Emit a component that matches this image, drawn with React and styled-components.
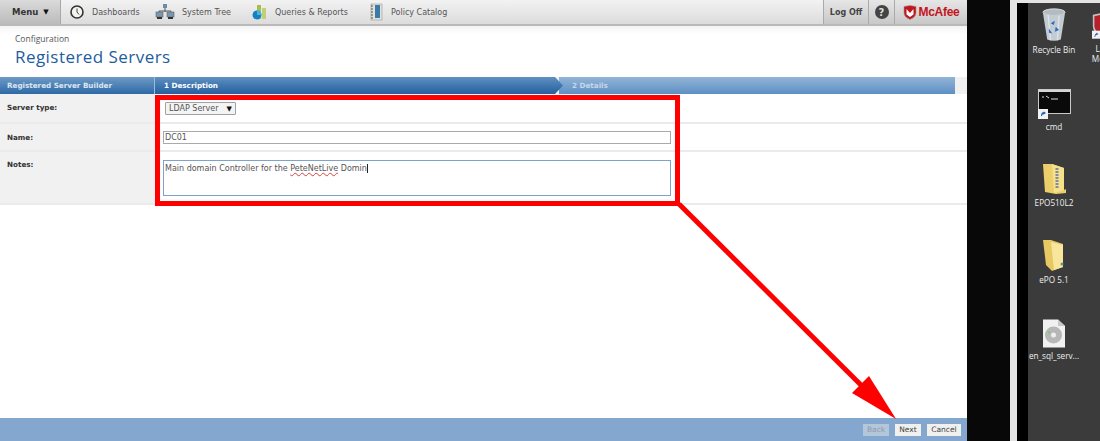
import React from "react";
import styled, { createGlobalStyle } from "styled-components";

const GlobalStyle = createGlobalStyle`
  html, body {
    margin: 0;
    padding: 0;
    background: #000;
  }
  * {
    box-sizing: border-box;
  }
`;

const navItems = [
  { label: "Dashboards", icon: <ClockIcon />, width: 86 },
  { label: "System Tree", icon: <TreeIcon />, width: 97 },
  { label: "Queries & Reports", icon: <ChartIcon />, width: 116 },
  { label: "Policy Catalog", icon: <BookIcon />, width: 95 },
];

const desktopItems = [
  { label: "Recycle Bin", x: 1024, y: 8, icon: <BinIcon /> },
  { label: "cmd", x: 1024, y: 85, icon: <CmdIcon /> },
  { label: "EPO510L2", x: 1024, y: 161, icon: <ZipFolderIcon /> },
  { label: "ePO 5.1", x: 1024, y: 238, icon: <FolderIcon /> },
  { label: "en_sql_serv...", x: 1024, y: 314, icon: <DiscIcon /> },
];

function ClockIcon() {
  return (
    <svg width="16" height="16" viewBox="0 0 16 16">
      <circle cx="8" cy="8" r="6" fill="#f4f4f0" stroke="#333" strokeWidth="1.6" />
      <path d="M8 4.5 V8 L10 10.5" fill="none" stroke="#444" strokeWidth="1" />
    </svg>
  );
}

function TreeIcon() {
  return (
    <svg width="20" height="18" viewBox="0 0 20 18">
      <rect x="8" y="1" width="4" height="4" fill="#6b8ba8" />
      <path d="M10 5 V9 M4 10 V8 H16 V10" fill="none" stroke="#555" strokeWidth="1" />
      <rect x="1" y="9" width="7" height="5" fill="#7d98ae" stroke="#56636e" strokeWidth=".6" />
      <rect x="12" y="9" width="7" height="5" fill="#7d98ae" stroke="#56636e" strokeWidth=".6" />
      <rect x="2" y="14" width="5" height="2" fill="#333" />
      <rect x="13" y="14" width="5" height="2" fill="#333" />
    </svg>
  );
}

function ChartIcon() {
  return (
    <svg width="16" height="18" viewBox="0 0 16 18">
      <rect x="5" y="2" width="4" height="14" fill="#a5c04a" />
      <rect x="10" y="5" width="4" height="11" fill="#c2cf76" />
      <circle cx="5" cy="12" r="4.5" fill="#1680c4" />
      <path d="M5 12 V7.5 A4.5 4.5 0 0 1 9.5 12 Z" fill="#43b6d6" />
    </svg>
  );
}

function BookIcon() {
  return (
    <svg width="13" height="18" viewBox="0 0 13 18">
      <rect x="1" y="1" width="11" height="16" fill="#e2e2dc" stroke="#9a9a94" strokeWidth=".6" />
      <rect x="5" y="2" width="5" height="13" fill="#3a7aa8" />
      <path d="M1 3 H3 M1 6 H3 M1 9 H3 M1 12 H3 M1 15 H3" stroke="#555" strokeWidth="1" />
    </svg>
  );
}

function ShieldIcon() {
  return (
    <svg width="14" height="15" viewBox="0 0 14 15">
      <path d="M1 1.5 L7 .5 L13 1.5 V8 Q13 12 7 14.5 Q1 12 1 8 Z" fill="#c4141c" stroke="#999" strokeWidth=".6" />
      <path d="M3.5 4 L7 8 L10.5 4 V9.5 L7 12 L3.5 9.5 Z" fill="#fff" />
    </svg>
  );
}

function BinIcon() {
  return (
    <svg width="26" height="34" viewBox="0 0 30 40">
      <ellipse cx="15" cy="5" rx="13" ry="4" fill="#b4bcc2" stroke="#dfe4e6" />
      <path d="M2 6 L7 37 Q15 40 23 37 L28 6 Q15 11 2 6 Z" fill="#c3ccd2" />
      <path d="M8 8 L11 38 M21 9 L19 38" stroke="#eef1f2" strokeWidth="1.5" opacity=".7" />
      <path d="M11 18 L16 15 L15 20 Z M17 22 L21 26 L16 28 Z M9 24 L13 30 L9 29 Z" fill="#2e6fc4" />
    </svg>
  );
}

function CmdIcon() {
  return (
    <svg width="33" height="30" viewBox="0 0 33 30">
      <rect x=".5" y=".5" width="32" height="24" fill="#0a0a0a" stroke="#c9c9c9" />
      <rect x="1" y="1" width="31" height="2" fill="#d5d5d5" />
      <path d="M4 8 H6 M8 7 L11 9 M13 10 H20" stroke="#ddd" strokeWidth="1" />
      <rect x="0" y="20" width="10" height="10" fill="#f2f2f2" />
      <path d="M3 27 Q3 23 6 23 L5 22 L8 24 L5 26 L6 25 Q4 25 4 27 Z" fill="#1c5fb4" />
    </svg>
  );
}

function ZipFolderIcon() {
  return (
    <svg width="25" height="32" viewBox="0 0 25 32">
      <path d="M1 1 H10 L22 5 V27 L24 26 V30 L14 31 L3 29 Z" fill="#eccf6a" />
      <path d="M10 1 L22 5 V27 L12 30 Z" fill="#f6e08c" />
      <path d="M15 5 V26" stroke="#7d8d9c" strokeWidth="3" strokeDasharray="2 1" />
    </svg>
  );
}

function FolderIcon() {
  return (
    <svg width="25" height="33" viewBox="0 0 25 33">
      <path d="M1 1 H9 L21 5 V28 L10 32 L4 26 Z" fill="#e7c862" />
      <path d="M9 3 L21 6 V28 L12 31 Z" fill="#f7e69c" />
      <circle cx="20" cy="25" r="1.5" fill="#6c8aa0" />
    </svg>
  );
}

function DiscIcon() {
  return (
    <svg width="24" height="29" viewBox="0 0 24 29">
      <path d="M1 .5 H16 L23 7 V28.5 H1 Z" fill="#f1f1f1" />
      <path d="M16 .5 V7 H23 Z" fill="#c8c8c8" />
      <circle cx="11.5" cy="16" r="8.5" fill="#b7b7b7" />
      <circle cx="11.5" cy="16" r="2.5" fill="#eee" />
      <circle cx="7" cy="13.5" r="1" fill="#66cc66" />
    </svg>
  );
}

function ShortcutShieldIcon() {
  return (
    <svg width="30" height="33" viewBox="0 0 30 33">
      <path d="M1 3 L15 0 L29 3 V17 Q29 26 15 33 Q1 26 1 17 Z" fill="#c0c0c0" />
      <path d="M3 5 L15 2 L27 5 V17 Q27 24 15 30 Q3 24 3 17 Z" fill="#b5202a" />
      <rect x="0" y="23" width="10" height="10" fill="#f2f2f2" />
      <path d="M3 31 Q3 27 6 26 L5 25 L8 27 L5 29 L6 28 Q4 28 4 31 Z" fill="#1c5fb4" />
    </svg>
  );
}

const Screen = styled.div`
  display: flex;
  position: relative;
  width: 1100px;
  height: 441px;
  overflow: hidden;
  background: #080808;
`;

const Console = styled.div`
  display: flex;
  flex-direction: column;
  width: 967px;
  height: 441px;
  background: #fff;
  font-family: "DejaVu Sans", sans-serif;
  font-size: 8px;
  color: #444;
`;

const TopBar = styled.header`
  display: flex;
  align-items: stretch;
  height: 26px;
  background: linear-gradient(#f2f2f2, #dcdcdc);
  border-bottom: 2px solid #b9b9b9;
`;

const MenuButton = styled.div`
  display: flex;
  align-items: center;
  gap: 5px;
  width: 61px;
  padding-left: 12px;
  background: linear-gradient(#dadada, #bbb);
  border-right: 1px solid #a8a8a8;
  font-size: 8.5px;
  font-weight: bold;
  color: #333;
`;

const NavList = styled.nav`
  display: flex;
  align-items: center;
  flex: 1;
  padding-left: 8px;
`;

const NavItem = styled.div`
  display: flex;
  align-items: center;
  gap: 7px;
  width: ${(p) => p.$width}px;
  white-space: nowrap;
  color: #555;
`;

const NavIcon = styled.span`
  display: flex;
  justify-content: center;
  flex: 0 0 ${(p) => p.$size || 16}px;
`;

const BarCell = styled.div`
  display: flex;
  align-items: center;
  justify-content: center;
  gap: 2px;
  width: ${(p) => p.$width}px;
  background: linear-gradient(#e6e6e6, #c8c8c8);
  border-left: 1px solid #aaa;
  font-weight: bold;
  color: #444;
`;

const HelpDot = styled.span`
  display: flex;
  align-items: center;
  justify-content: center;
  width: 14px;
  height: 14px;
  border-radius: 50%;
  background: #444;
  color: #ddd;
  font-size: 10px;
  font-weight: bold;
`;

const Brand = styled.span`
  font-family: "Liberation Sans", sans-serif;
  font-size: 12px;
  font-weight: bold;
  letter-spacing: -0.3px;
  color: #c4141c;
`;

const PageHead = styled.div`
  height: 51px;
  padding: 7px 0 0 15px;
  background: linear-gradient(#f4f4f4, #fff 8px);
`;

const Crumb = styled.div`
  font-family: "Open Sans", sans-serif;
  font-size: 8.5px;
  line-height: 11px;
  color: #555;
`;

const PageTitle = styled.h1`
  margin: 2px 0 0;
  font-family: "Open Sans", sans-serif;
  font-size: 17px;
  line-height: 22px;
  font-weight: 400;
  letter-spacing: 0.45px;
  color: #1d5d9e;
`;

const WizardBar = styled.div`
  display: flex;
  height: 17px;
  background: #f0f0f0;
  font-size: 7.2px;
  font-weight: bold;
  color: #fff;
`;

const WizardTitle = styled.div`
  display: flex;
  align-items: center;
  width: 155px;
  padding-left: 7px;
  background: linear-gradient(#6e9ac6, #2e6aa6);
  border-right: 1px solid #9dbbd8;
  color: #dbe6f1;
`;

const WizardStep = styled.div`
  display: flex;
  align-items: center;
  width: 408px;
  padding-left: 9px;
  background: linear-gradient(#5f90c1, #245f9e);
  clip-path: polygon(0 0, 400px 0, 100% 50%, 400px 100%, 0 100%);
`;

const WizardRest = styled.div`
  display: flex;
  align-items: center;
  width: 396px;
  margin-left: -4px;
  padding-left: 13px;
  background: linear-gradient(#93b4d6, #5d90c4);
  color: #c5d6e8;
`;

const FormRow = styled.div`
  display: flex;
  height: ${(p) => p.$height}px;
  border-bottom: 2px solid #ebebeb;
`;

const RowLabel = styled.div`
  width: 155px;
  padding: ${(p) => p.$top}px 0 0 7px;
  background: #f1f1f1;
  font-size: 7.2px;
  font-weight: bold;
  color: #333;
`;

const RowValue = styled.div`
  flex: 1;
  padding: ${(p) => p.$top}px 0 0 ${(p) => p.$left}px;
`;

const SelectBox = styled.div`
  display: flex;
  align-items: center;
  justify-content: space-between;
  width: 71px;
  height: 13px;
  padding: 0 3px;
  border: 1px solid #a0a0a0;
  border-radius: 1px;
  background: #f4f4f4;
  font-size: 8px;
  color: #555;
`;

const Caret = styled.span`
  font-size: 7px;
  color: #111;
`;

const TextField = styled.div`
  width: 508px;
  height: ${(p) => p.$height}px;
  padding: ${(p) => p.$pad}px 0 0 1px;
  border: 1px solid ${(p) => p.$border};
  background: #fff;
  font-size: 8px;
  line-height: 10px;
  color: #555;
`;

const Misspelled = styled.span`
  text-decoration: underline wavy #d84040 1px;
`;

const TextCaret = styled.span`
  border-right: 1px solid #222;
`;

const Filler = styled.div`
  flex: 1;
`;

const Footer = styled.footer`
  display: flex;
  align-items: center;
  justify-content: flex-end;
  gap: 6px;
  height: 23px;
  padding-right: 6px;
  background: #84a7cf;
`;

const FooterButton = styled.div`
  display: flex;
  align-items: center;
  justify-content: center;
  width: ${(p) => p.$width}px;
  height: 12px;
  background: ${(p) => (p.$disabled ? "#b4c6d9" : "#f0f0ee")};
  color: ${(p) => (p.$disabled ? "#8c9cad" : "#444")};
  font-size: 7.5px;
`;

const SideDivider = styled.div`
  width: 7px;
  height: 441px;
  margin-left: 43px;
  background: #e4e4e4;
`;

const DesktopEdge = styled.div`
  width: 11px;
  height: 441px;
  background: #000;
`;

const Desktop = styled.div`
  flex: 1;
  height: 441px;
  background: #3b3b3b;
`;

const TopEdge = styled.div`
  position: absolute;
  left: 1010px;
  top: 0;
  width: 90px;
  height: 3px;
  background: #e4e4e4;
`;

const DesktopIcon = styled.div`
  position: absolute;
  left: ${(p) => p.$x}px;
  top: ${(p) => p.$y}px;
  display: flex;
  flex-direction: column;
  align-items: center;
  width: 60px;
  height: 60px;
`;

const IconArt = styled.div`
  display: flex;
  align-items: flex-end;
  justify-content: center;
  height: 34px;
`;

const IconLabel = styled.div`
  margin-top: 2px;
  font-family: "Open Sans", sans-serif;
  font-size: 8.2px;
  line-height: 11px;
  white-space: nowrap;
  color: #eee;
`;

const Shortcut = styled.div`
  position: absolute;
  left: 1084px;
  top: 9px;
  width: 32px;
  text-align: center;
  font-family: "Open Sans", sans-serif;
  font-size: 8.2px;
  line-height: 10px;
  color: #eee;
`;

const ShortcutArt = styled.div`
  display: flex;
  height: 33px;
  margin-bottom: 2px;
  padding-left: 8px;
`;

const Annotation = styled.svg`
  position: absolute;
  left: 0;
  top: 0;
  pointer-events: none;
`;

export default function App() {
  return (
    <Screen>
      <GlobalStyle />
      <Console>
        <TopBar>
          <MenuButton>
            Menu <Caret>▼</Caret>
          </MenuButton>
          <NavList>
            {navItems.map((item) => (
              <NavItem key={item.label} $width={item.width}>
                <NavIcon>{item.icon}</NavIcon>
                {item.label}
              </NavItem>
            ))}
          </NavList>
          <BarCell $width={45}>Log Off</BarCell>
          <BarCell $width={26}>
            <HelpDot>?</HelpDot>
          </BarCell>
          <BarCell $width={73}>
            <ShieldIcon />
            <Brand>McAfee</Brand>
          </BarCell>
        </TopBar>
        <PageHead>
          <Crumb>Configuration</Crumb>
          <PageTitle>Registered Servers</PageTitle>
        </PageHead>
        <WizardBar>
          <WizardTitle>Registered Server Builder</WizardTitle>
          <WizardStep>1 Description</WizardStep>
          <WizardRest>2 Details</WizardRest>
        </WizardBar>
        <FormRow $height={30}>
          <RowLabel $top={9}>Server type:</RowLabel>
          <RowValue $top={8} $left={10}>
            <SelectBox>
              LDAP Server <Caret>▼</Caret>
            </SelectBox>
          </RowValue>
        </FormRow>
        <FormRow $height={28}>
          <RowLabel $top={9}>Name:</RowLabel>
          <RowValue $top={7} $left={8}>
            <TextField $height={13} $pad={1} $border="#aaa">
              DC01
            </TextField>
          </RowValue>
        </FormRow>
        <FormRow $height={53}>
          <RowLabel $top={8}>Notes:</RowLabel>
          <RowValue $top={8} $left={8}>
            <TextField $height={36} $pad={3} $border="#7da2ce">
              <TextCaret>
                Main domain Controller for the <Misspelled>PeteNetLive</Misspelled> Domin
              </TextCaret>
            </TextField>
          </RowValue>
        </FormRow>
        <Filler />
        <Footer>
          <FooterButton $width={26} $disabled>
            Back
          </FooterButton>
          <FooterButton $width={26}>Next</FooterButton>
          <FooterButton $width={34}>Cancel</FooterButton>
        </Footer>
      </Console>
      <SideDivider />
      <DesktopEdge />
      <Desktop />
      <TopEdge />
      {desktopItems.map((item) => (
        <DesktopIcon key={item.label} $x={item.x} $y={item.y}>
          <IconArt>{item.icon}</IconArt>
          <IconLabel>{item.label}</IconLabel>
        </DesktopIcon>
      ))}
      <Shortcut>
        <ShortcutArt>
          <ShortcutShieldIcon />
        </ShortcutArt>
        La
        <br />
        McA
      </Shortcut>
      <Annotation width="1100" height="441" viewBox="0 0 1100 441">
        <rect x="157.5" y="97.5" width="520" height="106" fill="none" stroke="#f00" strokeWidth="5" />
        <path d="M679 204 L864 388" stroke="#f00" strokeWidth="5" fill="none" />
        <path d="M869 376 L852 393 L896 419 Z" fill="#f00" />
      </Annotation>
    </Screen>
  );
}
